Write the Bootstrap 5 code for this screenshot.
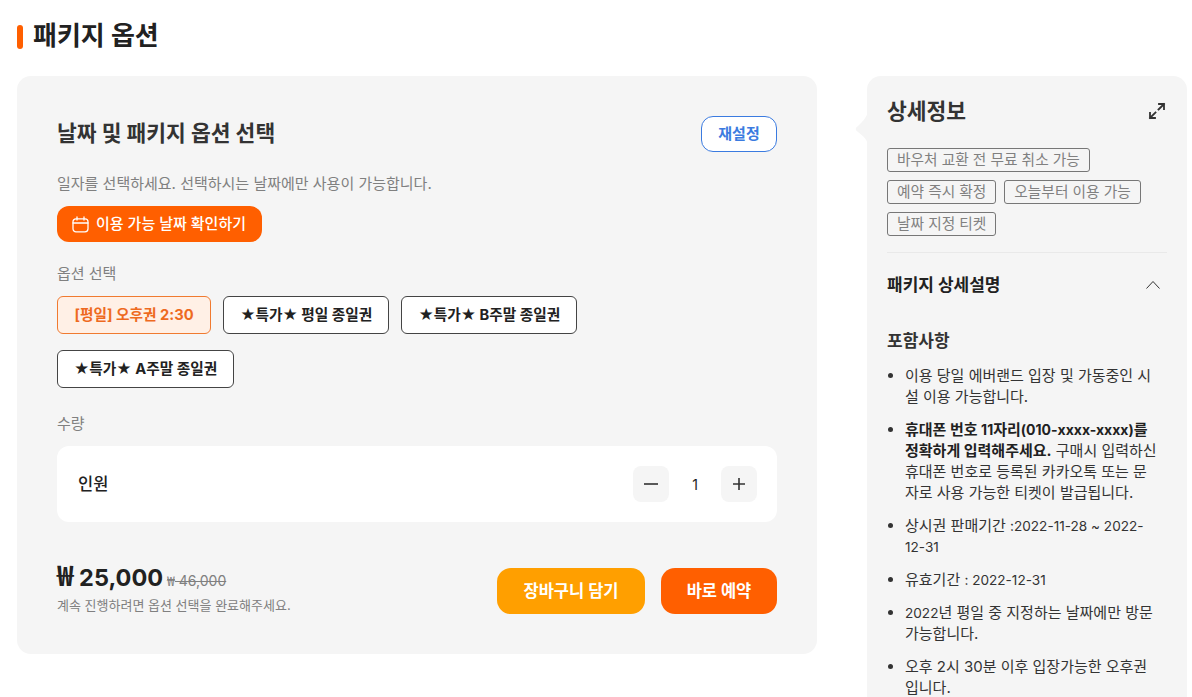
<!DOCTYPE html>
<html lang="ko">
<head>
<meta charset="utf-8">
<title>패키지 옵션</title>
<link href="https://cdn.jsdelivr.net/npm/bootstrap@5.3.0/dist/css/bootstrap.min.css" rel="stylesheet">
<style>
html,body{height:697px;overflow:hidden;background:#fff}
body{font-family:"Inter","Noto Sans CJK KR",sans-serif;color:#212121;font-size:15px}
.page-wrap{padding:17px 5px 0 17px;height:697px;overflow:hidden}
.title-row{height:38px;margin-bottom:21px}
.page-title{font-size:26px;font-weight:700;line-height:38px;margin:0;color:#212121}
.title-bar{width:6px;height:24px;border-radius:3px;background:#ff5f00;margin:1px 10px 0 0}
.main-panel{width:800px;height:578px;background:#f5f5f5;border-radius:14px;padding:40px;flex:none}
.main-panel>*{flex:none}
.panel-title{font-size:21.5px;font-weight:700;line-height:32px;margin:0 0 2px;color:#333}
.reset-btn{width:76px;height:36px;border:1px solid #3b7be0;border-radius:12px;background:#fff;color:#3b7be0;font-size:15px;font-weight:700;padding:0}
.hint{font-size:15px;color:#808080;line-height:20px;margin-top:22px}
.date-btn{width:205px;height:36px;border-radius:12px;background:#ff5f00;color:#fff;font-size:15px;font-weight:500;border:0;padding:0 0 0 15px;gap:7px;margin-top:12px}
.field-label{font-size:15px;color:#808080;line-height:20px}
.opt-row{gap:16px 12px;margin-top:12px;max-width:620px}
.opt-btn{height:38px;border:1px solid #444;border-radius:6px;background:#fff;color:#212121;font-size:14.7px;font-weight:700;padding:0 16px}
.opt-btn.picked{background:#fff0e6;border-color:#f07a30;color:#ee6a1f;padding:0 16.5px}
.qty-box{height:76px;background:#fff;border-radius:12px;padding:0 20px 0 21px;margin-top:12px}
.qty-name{font-size:16.5px;font-weight:500}
.qty-btn{width:36px;height:36px;border:0;border-radius:8px;background:#f5f5f5;padding:0}
.qty-num{width:52px;text-align:center;font-size:14px}
.buy-row{margin-top:46px}
.price-block{margin-top:-9px}
.price-now{font-size:23.5px;font-weight:700;line-height:30px}
.won{font-family:"Noto Sans CJK KR",sans-serif}
.price-now .won{font-size:28px;line-height:30px}
.price-old{font-size:14px;color:#808080;text-decoration:line-through;margin-left:4px}
.price-note{font-size:13px;color:#808080;line-height:18px;margin-top:3px}
.buy-btn{height:46px;border:0;border-radius:14px;color:#fff;font-size:16.5px;font-weight:700;padding:0}
.cart{width:148px;background:#ff9f00}
.now{width:116px;background:#ff5f00}
.side-panel{width:320px;height:700px;background:#f5f5f5;border-radius:14px 14px 0 0;padding:20px;margin-left:50px;flex:none;position:relative}
.side-panel::before{content:"";position:absolute;left:-12px;top:33px;width:13px;height:38px;background:#f5f5f5;clip-path:path("M13 2C12 8 8 12 3 17C0 19 0 21 3 23C8 27 12 30 13 36Z")}
.side-title{font-size:21.5px;font-weight:700;line-height:30px;color:#333;margin:0}
.expand-ic{margin-right:1px}
.tag-row{margin-top:22px}
.tag-item{height:24px;border:1px solid #777;border-radius:3px;color:#808080;font-size:14.7px;line-height:22px;padding:0 9px;background:transparent}
.side-rule{border-top:1px solid #e9e9e9;margin:16px 0 20px}
.sub-title{font-size:17px;font-weight:700;line-height:24px;margin:0;color:#212121}
.chev-ic{margin-right:7px}
.incl-title{font-size:17px;font-weight:700;line-height:24px;margin:32px 0 12px;color:#333}
.incl-list{padding:0 8px 0 18px;margin:0;font-size:15px;line-height:21px;color:#333}
.incl-list li{margin-bottom:12px}
.incl-list b{font-weight:700;color:#212121}
.incl-list b .lat{font-size:14px}
.lat{font-size:13.6px;line-height:1}
</style>
</head>
<body>
<div class="page-wrap">
  <div class="d-flex align-items-center title-row"><span class="title-bar"></span><h1 class="page-title">패키지 옵션</h1></div>
  <div class="d-flex align-items-start">
    <section class="main-panel d-flex flex-column">
      <div class="d-flex justify-content-between align-items-center">
        <h2 class="panel-title">날짜 및 패키지 옵션 선택</h2>
        <button class="reset-btn" type="button">재설정</button>
      </div>
      <div class="hint">일자를 선택하세요. 선택하시는 날짜에만 사용이 가능합니다.</div>
      <button class="date-btn d-flex align-items-center" type="button">
        <svg width="17" height="17" viewBox="0 0 17 17" fill="none" stroke="#fff" stroke-width="1.3" stroke-linecap="round"><rect x="1" y="2.8" width="15" height="13" rx="3"/><path d="M1 7h15M5 1v3M12 1v3"/></svg>
        <span>이용 가능 날짜 확인하기</span>
      </button>
      <div class="field-label" style="margin-top:22px">옵션 선택</div>
      <div class="d-flex flex-wrap opt-row">
        <button class="opt-btn picked" type="button">[평일] 오후권 2:30</button>
        <button class="opt-btn" type="button">★특가★ 평일 종일권</button>
        <button class="opt-btn" type="button">★특가★ B주말 종일권</button>
        <button class="opt-btn" type="button">★특가★ A주말 종일권</button>
      </div>
      <div class="field-label" style="margin-top:26px">수량</div>
      <div class="qty-box d-flex align-items-center justify-content-between">
        <span class="qty-name">인원</span>
        <div class="d-flex align-items-center">
          <button class="qty-btn d-flex align-items-center justify-content-center" type="button" aria-label="감소"><svg width="14" height="14" viewBox="0 0 14 14" stroke="#333" stroke-width="1.6"><path d="M0 7h14"/></svg></button>
          <span class="qty-num">1</span>
          <button class="qty-btn d-flex align-items-center justify-content-center" type="button" aria-label="증가"><svg width="14" height="14" viewBox="0 0 14 14" stroke="#333" stroke-width="1.6"><path d="M1 7h12M7 1v12"/></svg></button>
        </div>
      </div>
      <div class="d-flex justify-content-between align-items-start buy-row">
        <div class="price-block">
          <div class="d-flex align-items-baseline"><span class="price-now"><span class="won">₩</span> 25,000</span><span class="price-old"><span class="won">₩</span> 46,000</span></div>
          <div class="price-note">계속 진행하려면 옵션 선택을 완료해주세요.</div>
        </div>
        <div class="d-flex gap-3">
          <button class="buy-btn cart" type="button">장바구니 담기</button>
          <button class="buy-btn now" type="button">바로 예약</button>
        </div>
      </div>
    </section>
    <aside class="side-panel">
      <div class="d-flex justify-content-between align-items-center">
        <h2 class="side-title">상세정보</h2>
        <svg class="expand-ic" width="18" height="18" viewBox="0 0 18 18" fill="none" stroke="#333" stroke-width="1.8" stroke-linecap="square"><path d="M11 2h5v5M16 2l-5.5 5.5M2 11v5h5M2 16l5.5-5.5"/></svg>
      </div>
      <div class="d-flex flex-wrap gap-2 tag-row">
        <span class="tag-item">바우처 교환 전 무료 취소 가능</span>
        <span class="tag-item">예약 즉시 확정</span>
        <span class="tag-item">오늘부터 이용 가능</span>
        <span class="tag-item">날짜 지정 티켓</span>
      </div>
      <div class="side-rule"></div>
      <div class="d-flex justify-content-between align-items-center">
        <h3 class="sub-title">패키지 상세설명</h3>
        <svg class="chev-ic" width="14" height="8" viewBox="0 0 14 8" fill="none" stroke="#333" stroke-width="1"><path d="M.5 7.5l6.5-7 6.5 7"/></svg>
      </div>
      <h4 class="incl-title">포함사항</h4>
      <ul class="incl-list">
        <li>이용 당일 에버랜드 입장 및 가동중인 시설 이용 가능합니다.</li>
        <li><b>휴대폰 번호 <span class="lat">11</span>자리<span class="lat">(010-xxxx-xxxx)</span>를 정확하게 입력해주세요.</b> 구매시 입력하신 휴대폰 번호로 등록된 카카오톡 또는 문자로 사용 가능한 티켓이 발급됩니다.</li>
        <li>상시권 판매기간 <span class="lat">:2022-11-28 ~ 2022-12-31</span></li>
        <li>유효기간 <span class="lat">: 2022-12-31</span></li>
        <li><span class="lat">2022</span>년 평일 중 지정하는 날짜에만 방문 가능합니다.</li>
        <li>오후 2시 30분 이후 입장가능한 오후권 입니다.</li>
      </ul>
    </aside>
  </div>
</div>
</body>
</html>
